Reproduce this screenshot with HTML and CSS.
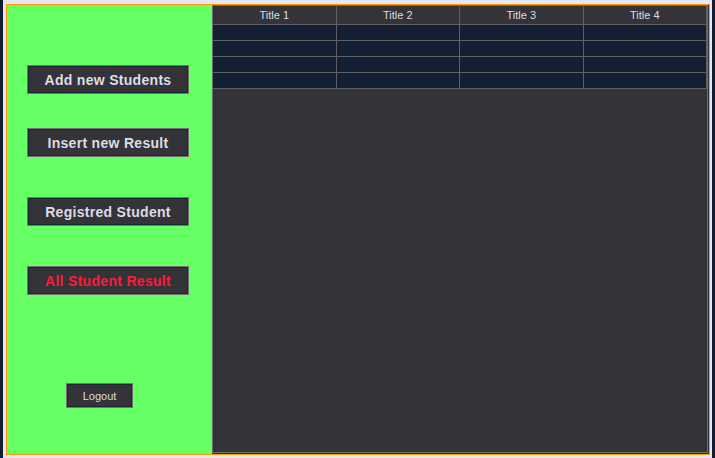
FILE: index.html
```html
<!DOCTYPE html>
<html>
<head>
<meta charset="utf-8">
<link rel="stylesheet" href="styles.css">
</head>
<body>
<div class="window">
  <div class="frame">
    <div class="sidebar">
      <button class="btn btn-add">Add new Students</button>
      <button class="btn btn-insert">Insert new Result</button>
      <button class="btn btn-reg">Registred Student</button>
      <button class="btn btn-all">All Student Result</button>
      <button class="logout">Logout</button>
    </div>
    <div class="panel">
      <div class="grid">
        <div class="th">Title 1</div>
        <div class="th">Title 2</div>
        <div class="th">Title 3</div>
        <div class="th">Title 4</div>
        <div class="td"></div><div class="td"></div><div class="td"></div><div class="td"></div>
        <div class="td"></div><div class="td"></div><div class="td"></div><div class="td"></div>
        <div class="td"></div><div class="td"></div><div class="td"></div><div class="td"></div>
        <div class="td"></div><div class="td"></div><div class="td"></div><div class="td"></div>
      </div>
    </div>
  </div>
</div>
</body>
</html>
```

FILE: styles.css
```css
html, body {
  margin: 0;
  padding: 0;
  background: #121d33;
  width: 715px;
  height: 458px;
  overflow: hidden;
}

.window {
  margin-left: 3px;
  width: 709px;
  height: 458px;
  box-sizing: border-box;
  padding: 4px 2px 3px 3px;
  background: #e6e6f6;
}

.frame {
  box-sizing: border-box;
  height: 451px;
  border: 1px solid #ff9900;
  background: #333338;
  display: flex;
}

.sidebar {
  width: 205px;
  flex: none;
  background: #66ff66;
  display: flex;
  flex-direction: column;
  align-items: flex-start;
  padding-left: 20px;
  box-sizing: border-box;
}

.btn {
  width: 162px;
  height: 29px;
  box-sizing: border-box;
  background: #333338;
  border: 1px solid #737378;
  outline: 1px solid #1c2538;
  outline-offset: -2px;
  color: #dcdce6;
  font-family: "Liberation Sans", Arial, sans-serif;
  font-weight: bold;
  font-size: 14px;
  padding: 0;
  letter-spacing: 0.3px;
  text-align: center;
}

.btn-add { margin-top: 60px; }
.btn-insert { margin-top: 34px; }
.btn-reg { margin-top: 40px; }
.btn-all { margin-top: 40px; color: #ff1a3c; }

.logout {
  margin-top: 88px;
  margin-left: 39px;
  width: 67px;
  height: 25px;
  box-sizing: border-box;
  background: #333338;
  border: 1px solid #737378;
  outline: 1px solid #1c2538;
  outline-offset: -2px;
  color: #dcdce6;
  font-family: "Liberation Sans", Arial, sans-serif;
  font-size: 11px;
  padding: 0;
}

.panel {
  flex: 1;
  margin: 0 1px 1px 0;
  border: 1px solid #6b6b6b;
  background: #333338;
}

.grid {
  display: grid;
  grid-template-columns: repeat(4, 1fr);
  grid-template-rows: 18px repeat(4, 15px);
  gap: 1px;
  background: #5f5f64;
  border-bottom: 1px solid #5f5f64;
  border-right: 1px solid #5f5f64;
}

.th {
  background: #333338;
  color: #dcdce6;
  font-family: "Liberation Sans", Arial, sans-serif;
  font-size: 11px;
  line-height: 18px;
  text-align: center;
}

.td {
  background: #131f33;
}
```
